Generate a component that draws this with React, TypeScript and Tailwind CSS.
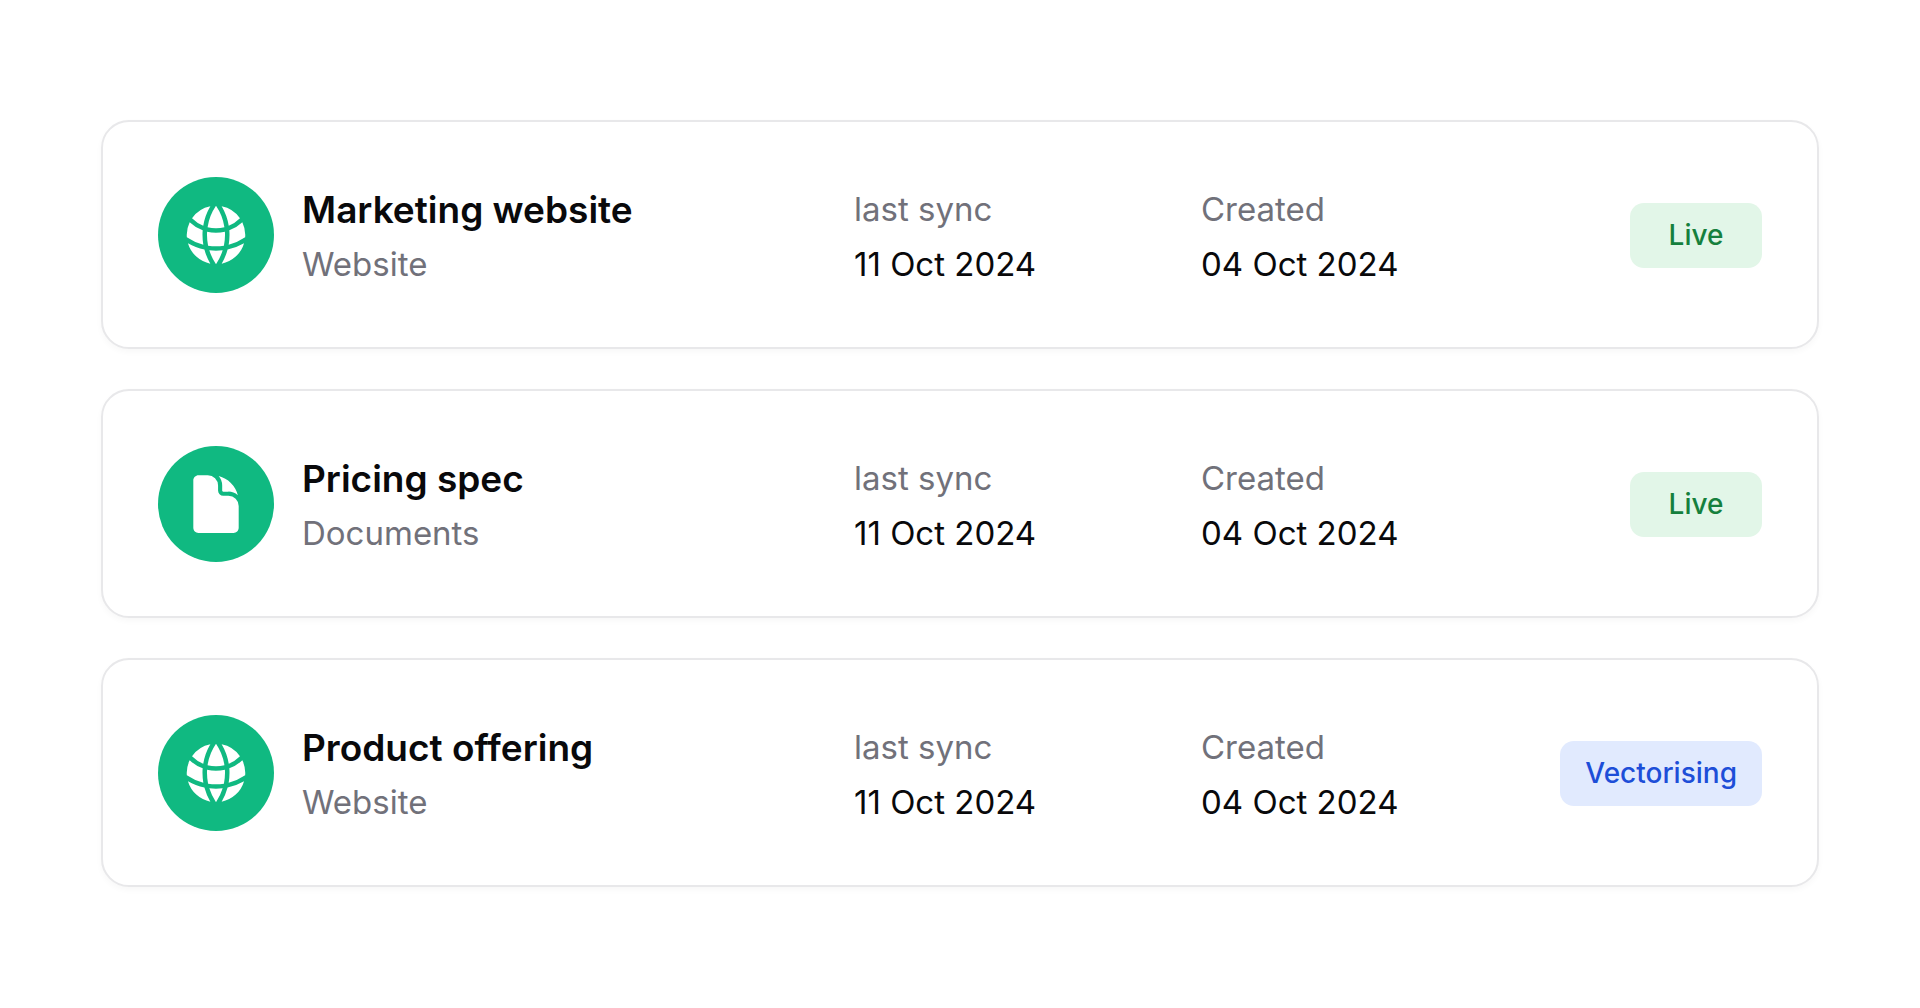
import { HiDocument, HiGlobeAlt } from "react-icons/hi2";

const sources = [
  {
    name: "Marketing website",
    type: "Website",
    lastSync: "11 Oct 2024",
    created: "04 Oct 2024",
    status: "Live",
  },
  {
    name: "Pricing spec",
    type: "Documents",
    lastSync: "11 Oct 2024",
    created: "04 Oct 2024",
    status: "Live",
  },
  {
    name: "Product offering",
    type: "Website",
    lastSync: "11 Oct 2024",
    created: "04 Oct 2024",
    status: "Vectorising",
  },
];

const statusStyles: Record<string, string> = {
  Live: "bg-[#e2f6e8] text-[#15803d]",
  Vectorising: "bg-[#e1eafe] text-[#1d4ed8]",
};

function SourceIcon({ type }: { type: string }) {
  return (
    <span className="flex size-[116px] shrink-0 items-center justify-center rounded-full bg-[#10b981] text-white">
      {type === "Website" ? (
        <HiGlobeAlt className="size-[72px]" aria-hidden="true" />
      ) : (
        <HiDocument className="size-[66px]" aria-hidden="true" />
      )}
    </span>
  );
}

function DateField({ label, value }: { label: string; value: string }) {
  return (
    <dl className="pt-1 text-[33px] leading-[55px]">
      <dt className="text-[#71717a]">{label}</dt>
      <dd className="text-[#09090b]">{value}</dd>
    </dl>
  );
}

export default function App() {
  return (
    <main className="min-h-screen bg-white px-[101px] py-[120px] font-['Inter',sans-serif]">
      <ul className="flex flex-col gap-10">
        {sources.map((source) => (
          <li
            key={source.name}
            className="grid grid-cols-[696fr_347fr_561fr] items-center rounded-[28px] border-2 border-[#e8e8ea] bg-white px-[55px] pt-[55px] pb-[54px] shadow-[0_3px_6px_rgb(0_0_0/0.03)]"
          >
            {/* Icon and name */}
            <div className="flex items-center gap-7">
              <SourceIcon type={source.type} />
              <div className="pt-0.5">
                <h2 className="text-[37px] leading-[56px] font-semibold text-[#09090b]">
                  {source.name}
                </h2>
                <p className="text-[33px] leading-[52px] text-[#71717a]">{source.type}</p>
              </div>
            </div>

            <DateField label="last sync" value={source.lastSync} />

            {/* Created and status */}
            <div className="flex items-center justify-between">
              <DateField label="Created" value={source.created} />
              <span
                className={`min-w-[132px] rounded-[14px] px-[25px] py-3 text-center text-[28px] leading-[41px] font-medium ${statusStyles[source.status]}`}
              >
                {source.status}
              </span>
            </div>
          </li>
        ))}
      </ul>
    </main>
  );
}
